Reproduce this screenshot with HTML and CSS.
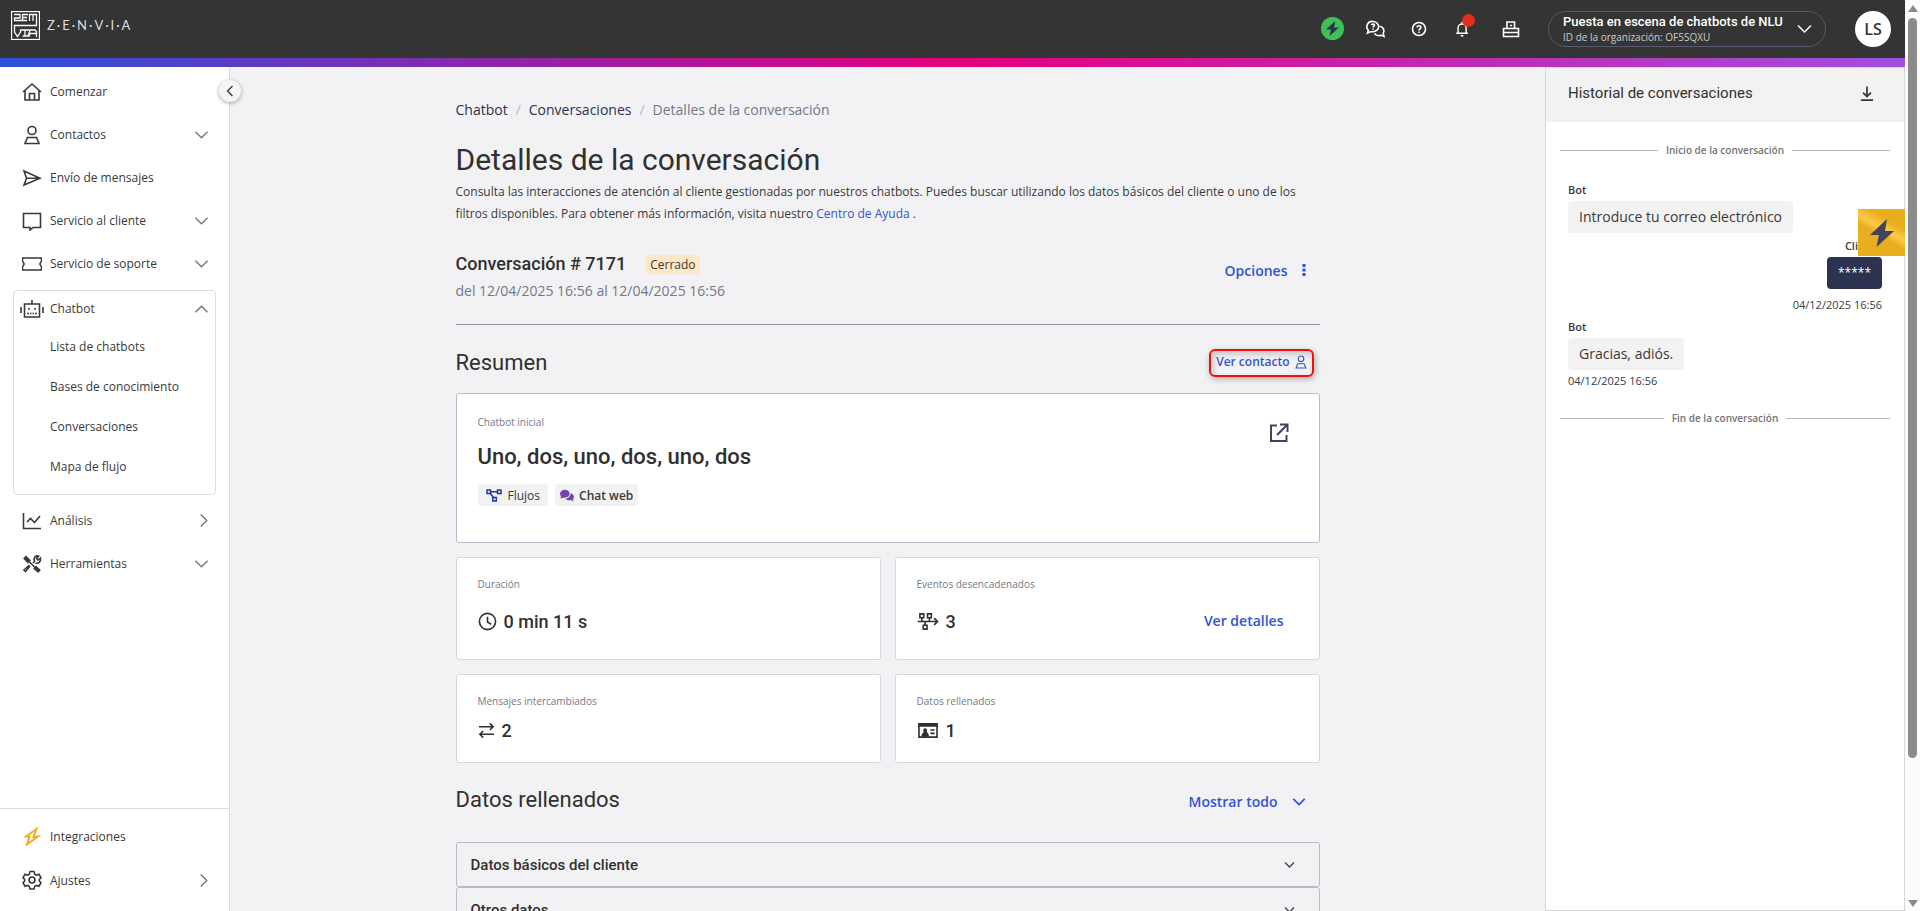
FILE: index.html
```html
<!DOCTYPE html>
<html lang="es">
<head>
    <meta charset="UTF-8">
    <meta name="viewport" content="width=device-width, initial-scale=1.0">
    <title>Detalles de la conversación</title>
    <link rel="stylesheet" href="styles.css">
</head>
<body>
<svg class="sprite" aria-hidden="true">
    <symbol id="down" viewBox="0 0 16 10"><path d="M1.500 1.500 8 8l6.500-6.500"/></symbol>
    <symbol id="up" viewBox="0 0 16 10"><path d="M1.500 8.500 8 2l6.500 6.500"/></symbol>
    <symbol id="right" viewBox="0 0 10 16"><path d="M1.500 1.500 8 8l-6.500 6.500"/></symbol>
    <symbol id="person" viewBox="0 0 20 20"><circle cx="10" cy="5.500" r="4"/><path d="M5.500 12.500h9l2.500 6H3z"/></symbol>
    <symbol id="bolt" viewBox="0 0 24 28"><path d="M17 0 0 16h9L6.500 28 24 12h-9z"/></symbol>
</svg>

<div class="app">
    <header class="topbar">
        <a class="brand" href="#" aria-label="Zenvia">
            <svg class="logo" viewBox="0 0 29 29">
                <rect x=".5" y=".5" width="28" height="28"/>
                <path d="M3 3.500h6V7H3.500v2.500H16M17 3.500h-5.500v6M11.500 6.500H16M18.500 10V3.500H25.500V14.500H3.500V21l3 4.500L9.500 21v-2h14.500l1.500 1.500v5.500M14 19v6M11.500 25h6V22.500h8M18.500 19v6.500M22 3.500V10"/>
            </svg>
            <span class="brand-name">Z·E·N·V·I·A</span>
        </a>
        <nav class="top-actions">
            <button type="button" class="go" aria-label="Integraciones"><svg viewBox="0 0 24 28"><use href="#bolt"/></svg></button>
            <button type="button" class="top-btn" aria-label="Chat de ayuda">
                <svg viewBox="0 0 20 18">
                    <path d="M7 1.500a5.500 5 0 0 1 0 10.200H4.300L1.500 13l.8-2.700A5.300 5.300 0 0 1 7 1.500z"/>
                    <path d="M13.500 6.200c4 .3 5.500 4.600 3.700 7.300l.8 3-3-1.200c-2.500.8-5.400-.1-6.500-2"/>
                    <path d="M5.600 5.200c.2-1.500 2.900-1.500 2.900.1 0 1-1.400 1-1.400 2.200M7.100 8.500v1.200"/>
                </svg>
            </button>
            <button type="button" class="top-btn" aria-label="Ayuda">
                <svg viewBox="0 0 18 18">
                    <circle cx="9" cy="9" r="6.500"/>
                    <path d="M7.200 7.500c0-2.300 3.700-2.200 3.700 0 0 1.400-1.900 1.400-1.900 2.900M9 11.500V13"/>
                </svg>
            </button>
            <button type="button" class="top-btn" aria-label="Notificaciones">
                <svg viewBox="0 0 18 20">
                    <path d="M9 2v2M4.500 14.500V9a4.500 4.500 0 0 1 9 0v5.500M2.500 14.800h13M7.500 17.500h3"/>
                </svg>
                <span class="dot"></span>
            </button>
            <button type="button" class="top-btn" aria-label="Facturas">
                <svg viewBox="0 0 18 18"><path d="M5 9V2h7.500v7M1.500 8.500h15v8h-15zM1.500 12.500h15M8 5.500h2"/></svg>
            </button>
        </nav>
        <button type="button" class="org">
            <span class="org-text">
                <span class="org-name">Puesta en escena de chatbots de NLU</span>
                <span class="org-id">ID de la organización: OF5SQXU</span>
            </span>
            <svg class="chev" viewBox="0 0 16 10"><use href="#down"/></svg>
        </button>
        <button type="button" class="avatar">LS</button>
    </header>

    <div class="body">
        <aside class="sidebar">
            <nav class="menu">
                <a class="item" href="#">
                    <svg class="ico" viewBox="0 0 20 20"><path d="M1 10 10 2l9 8M3 8.500V18h14V8.500M7.500 18v-6.500h5V18"/></svg>
                    <span>Comenzar</span>
                </a>
                <a class="item" href="#">
                    <svg class="ico" viewBox="0 0 20 20"><use href="#person"/></svg>
                    <span>Contactos</span>
                    <svg class="chev" viewBox="0 0 16 10"><use href="#down"/></svg>
                </a>
                <a class="item" href="#">
                    <svg class="ico" viewBox="0 0 20 20"><path d="M2 3l16 7.200L2 17l2.500-6.800zM4.500 10.200H18"/></svg>
                    <span>Envío de mensajes</span>
                </a>
                <a class="item" href="#">
                    <svg class="ico" viewBox="0 0 20 20"><path d="M1.500 2.500h17v14H11L8 19v-2.500H1.500z"/></svg>
                    <span>Servicio al cliente</span>
                    <svg class="chev" viewBox="0 0 16 10"><use href="#down"/></svg>
                </a>
                <a class="item" href="#">
                    <svg class="ico" viewBox="0 0 20 20"><path d="M.5 4h19v3.500q-3 2.500 0 5V16H.5v-3.500q3-2.500 0-5z"/></svg>
                    <span>Servicio de soporte</span>
                    <svg class="chev" viewBox="0 0 16 10"><use href="#down"/></svg>
                </a>
                <div class="group">
                    <a class="item" href="#">
                        <svg class="ico ico-bot" viewBox="0 0 24 20">
                            <path d="M4.500 5h15v13h-15zM12 5V1M1 8v6M23 8v6"/>
                            <path d="M8 10h2M14 10h2M7 14.500h2M10 14.500h1.500M12.500 14.500H14M15 14.500h2"/>
                        </svg>
                        <span>Chatbot</span>
                        <svg class="chev" viewBox="0 0 16 10"><use href="#up"/></svg>
                    </a>
                    <a class="sub" href="#">Lista de chatbots</a>
                    <a class="sub" href="#">Bases de conocimiento</a>
                    <a class="sub" href="#">Conversaciones</a>
                    <a class="sub" href="#">Mapa de flujo</a>
                </div>
                <a class="item" href="#">
                    <svg class="ico" viewBox="0 0 20 20"><path d="M1.500 2v15.500H19M5 11l3.500-3.500 4 4L18 5"/></svg>
                    <span>Análisis</span>
                    <svg class="chev chev-right" viewBox="0 0 10 16"><use href="#right"/></svg>
                </a>
                <a class="item" href="#">
                    <svg class="ico" viewBox="0 0 20 20">
                        <path class="thick" d="M2.500 3l5 5M12.500 13l5 4.500"/>
                        <path d="M7 7.500l6 6M8 12l-4.500 5.500L2 16l5.500-5M11 9l1.500-1.500c-1.500-4 1-6 4-5.500L14.500 4.500 16 6l2.500-2c.5 4-2 6-5 5"/>
                    </svg>
                    <span>Herramientas</span>
                    <svg class="chev" viewBox="0 0 16 10"><use href="#down"/></svg>
                </a>
            </nav>
            <nav class="menu-bottom">
                <a class="item" href="#">
                    <svg class="ico ico-gold" viewBox="0 0 20 20"><path d="M14.500 3 4 10.500h3.500L5 18.500 16 10.500l-4.500.5z"/></svg>
                    <span>Integraciones</span>
                </a>
                <a class="item" href="#">
                    <svg class="ico" viewBox="0 0 20 20">
                        <path d="M8 1.500h4l.7 2.600 1.800 1 2.500-.8 2 3.500-1.700 1.700v1.500l1.700 1.700-2 3.500-2.500-.8-1.800 1-.7 2.600H8l-.7-2.600-1.800-1-2.500.8-2-3.500 1.700-1.700V9.500L1 7.800l2-3.500 2.500.8 1.800-1z"/>
                        <circle cx="10" cy="10" r="3"/>
                    </svg>
                    <span>Ajustes</span>
                    <svg class="chev chev-right" viewBox="0 0 10 16"><use href="#right"/></svg>
                </a>
            </nav>
            <button type="button" class="collapse" aria-label="Contraer menú">
                <svg viewBox="0 0 8 12"><path d="M6.500 1 1.500 6l5 5"/></svg>
            </button>
        </aside>

        <main class="main">
            <div class="content">
                <nav class="crumbs">
                    <a href="#">Chatbot</a><span class="sep">/</span><a href="#">Conversaciones</a><span class="sep">/</span><span>Detalles de la conversación</span>
                </nav>
                <h1>Detalles de la conversación</h1>
                <p class="intro">Consulta las interacciones de atención al cliente gestionadas por nuestros chatbots. Puedes buscar utilizando los datos básicos del cliente o uno de los filtros disponibles. Para obtener más información, visita nuestro <a href="#">Centro de Ayuda</a> .</p>

                <section class="conv">
                    <div>
                        <div class="conv-title">
                            <h3>Conversación # 7171</h3>
                            <span class="badge">Cerrado</span>
                        </div>
                        <p class="dates">del 12/04/2025 16:56 al 12/04/2025 16:56</p>
                    </div>
                    <button type="button" class="link-btn options">Opciones
                        <svg class="kebab" viewBox="0 0 4 14"><path d="M.5 1h3v3h-3zM.5 5.500h3v3h-3zM.5 10h3v3h-3z"/></svg>
                    </button>
                </section>

                <div class="section-head">
                    <h2>Resumen</h2>
                    <button type="button" class="contact">Ver contacto
                        <svg viewBox="0 0 20 20"><use href="#person"/></svg>
                    </button>
                </div>

                <section class="card card-main">
                    <div>
                        <p class="label">Chatbot inicial</p>
                        <p class="bot-name">Uno, dos, uno, dos, uno, dos</p>
                        <div class="tags">
                            <span class="tag">
                                <svg viewBox="0 0 16 13"><path d="M1 1h3.500v3.500H1zM11.500 1H15v3.500h-3.500zM6.800 8.500h3.500V12H6.800zM4.500 2.700h7M4.300 4.500 7.500 8.500"/></svg>
                                Flujos
                            </span>
                            <span class="tag tag-web">
                                <svg viewBox="0 0 16 13"><path d="M5.500 0C2.500 0 0 2 0 4.500c0 1.200.5 2.200 1.300 3L.3 9.700c1.200 0 2.200-.4 3-1 3.900 1 7.700-1 7.700-4.200S8.500 0 5.500 0z"/><path d="M12 4c.3 3.500-2.500 5.800-6 6 1.200 1.700 4 2.500 6.500 1.700 1 .6 2 1 3.200 1l-1-2C17 8.500 16 5 12 4z"/></svg>
                                Chat web
                            </span>
                        </div>
                    </div>
                    <a class="open" href="#" aria-label="Abrir chatbot"><svg viewBox="0 0 20 20"><path d="M8 2.500H2V18h15.500v-6M11 1.500h7.500V9M18 2 8 12"/></svg></a>
                </section>

                <div class="grid">
                    <section class="card card-tall">
                        <p class="label">Duración</p>
                        <p class="value"><svg viewBox="0 0 20 20"><circle cx="10" cy="10" r="8.500"/><path d="M10 5v5.500l4 2.500"/></svg>0 min 11 s</p>
                    </section>
                    <section class="card card-tall">
                        <p class="label">Eventos desencadenados</p>
                        <div class="row">
                            <p class="value"><svg class="wide" viewBox="0 0 22 20"><path d="M2.500 2H6.500v4h-4zM10.500 2h4v4h-4zM6 14h4v4H6zM4.500 6v4M12.500 6v4M8 10v4M0 10h20.500M17.500 6.500 21 10l-3.500 3.500"/></svg>3</p>
                            <a class="details" href="#">Ver detalles</a>
                        </div>
                    </section>
                    <section class="card">
                        <p class="label">Mensajes intercambiados</p>
                        <p class="value"><svg class="narrow" viewBox="0 0 18 18"><path d="M1 5h15M12.500 1.500 16 5l-3.500 3.500M17 13H2M5.500 9.500 2 13l3.500 3.500"/></svg>2</p>
                    </section>
                    <section class="card">
                        <p class="label">Datos rellenados</p>
                        <p class="value"><svg class="wide" viewBox="0 0 22 20"><path d="M1.500 3h19v14h-19z"/><path class="fill" d="M1 2h20v4H1zM6 9.500A2 2 0 1 1 9.500 11q2.500 2 2.500 5.500H4q0-3.500 2.500-5z"/><path d="M13.500 9.500H18M13.500 13H18"/></svg>1</p>
                    </section>
                </div>

                <div class="section-head filled">
                    <h2>Datos rellenados</h2>
                    <button type="button" class="link-btn">Mostrar todo
                        <svg class="chev" viewBox="0 0 16 10"><use href="#down"/></svg>
                    </button>
                </div>
                <button type="button" class="accordion">Datos básicos del cliente<svg class="chev" viewBox="0 0 16 10"><use href="#down"/></svg></button>
                <button type="button" class="accordion">Otros datos<svg class="chev" viewBox="0 0 16 10"><use href="#down"/></svg></button>
            </div>
        </main>

        <aside class="history">
            <header class="history-head">
                <h2>Historial de conversaciones</h2>
                <button type="button" aria-label="Descargar"><svg viewBox="0 0 16 18"><path d="M8 1v11M3.500 8 8 12.500 12.500 8M1 16.500h14"/></svg></button>
            </header>
            <div class="mark">Inicio de la conversación</div>
            <div class="msg">
                <span class="who">Bot</span>
                <p class="bubble">Introduce tu correo electrónico</p>
            </div>
            <div class="msg msg-client">
                <span class="who">Cliente</span>
                <p class="bubble">*****</p>
                <time>04/12/2025 16:56</time>
            </div>
            <div class="msg">
                <span class="who">Bot</span>
                <p class="bubble">Gracias, adiós.</p>
                <time>04/12/2025 16:56</time>
            </div>
            <div class="mark mark-end">Fin de la conversación</div>
            <button type="button" class="widget" aria-label="Accesos rápidos"><svg viewBox="0 0 24 28"><use href="#bolt"/></svg></button>
        </aside>
    </div>
</div>

<div class="scrollbar">
    <span class="arrow"></span>
    <span class="thumb"></span>
    <span class="arrow arrow-down"></span>
</div>
</body>
</html>
```
FILE: styles.css
```css
* {
    box-sizing: border-box;
}

body {
    margin: 0;
    display: flex;
    height: 100vh;
    overflow: hidden;
    font-family: "Open Sans", sans-serif;
    font-size: 12px;
    color: #393939;
    background-color: #f2f2f4;
}

h1,
h2,
h3,
p {
    margin: 0;
}

h1,
h2,
h3 {
    color: #303030;
    font-weight: 400;
}

a {
    color: inherit;
    text-decoration: none;
}

button {
    font: inherit;
    color: inherit;
    background: none;
    border: 0;
    padding: 0;
    cursor: pointer;
}

svg {
    display: block;
    flex: none;
    fill: none;
    stroke: currentColor;
    stroke-width: 2;
}

.sprite {
    display: none;
}

.app {
    flex: 1;
    min-width: 0;
    display: flex;
    flex-direction: column;
}

.chev {
    width: 15px;
    height: 10px;
    stroke-width: 1.5;
}

/* Top bar */
.topbar {
    display: flex;
    align-items: center;
    height: 67px;
    flex: none;
    padding: 0 14px 10px 11px;
    color: #fff;
    background: linear-gradient(90deg, #2b50da, #e6007e 50%, #a04fdf) bottom / 100% 9px no-repeat #343434;
}

.brand {
    display: flex;
    align-items: center;
    gap: 7px;
    margin-right: auto;
    padding-bottom: 7px;
}

.logo {
    width: 29px;
    height: 29px;
    stroke-width: 1.3;
}

.brand-name {
    font-family: Lato, sans-serif;
    font-size: 13px;
    letter-spacing: 2px;
    color: #ddd;
}

.top-actions {
    display: flex;
    align-items: center;
    gap: 21px;
    margin-right: 26px;
}

.top-btn {
    position: relative;
    display: flex;
    justify-content: center;
    width: 22px;
}

.top-btn svg {
    height: 18px;
    stroke-width: 1.6;
}

.top-btn:last-child {
    margin-left: 6px;
}

.go {
    display: flex;
    align-items: center;
    justify-content: center;
    width: 23px;
    height: 23px;
    border-radius: 50%;
    background-color: #40bf58;
}

.go svg {
    width: 13px;
    height: 15px;
    fill: #2b3350;
    stroke: none;
}

.dot {
    position: absolute;
    top: -6px;
    right: -2px;
    width: 13px;
    height: 13px;
    border-radius: 50%;
    background-color: #e02f1c;
}

.org {
    display: flex;
    align-items: center;
    justify-content: space-between;
    width: 278px;
    height: 36px;
    padding: 0 12px 0 14px;
    border: 1px solid #575b72;
    border-radius: 18px;
    text-align: left;
}

.org-text {
    display: grid;
}

.org-name {
    font-family: Roboto, sans-serif;
    font-size: 13px;
    font-weight: 500;
    line-height: 16px;
}

.org-id {
    font-size: 10px;
    line-height: 14px;
    color: #ccc;
}

.org .chev {
    width: 17px;
}

.avatar {
    width: 36px;
    height: 36px;
    margin-left: 29px;
    border-radius: 50%;
    background-color: #fff;
    color: #343434;
    font-size: 16px;
    font-weight: 600;
}

.body {
    display: flex;
    flex: 1;
    min-height: 0;
}

/* Side menu */
.sidebar {
    position: relative;
    display: flex;
    flex-direction: column;
    justify-content: space-between;
    width: 230px;
    flex: none;
    border-right: 1px solid #d9dae0;
    background-color: #fff;
}

.menu {
    padding: 3px 13px 0;
}

.item {
    display: flex;
    align-items: center;
    height: 43px;
    padding: 0 7px 0 9px;
}

.item span {
    margin-left: 8px;
    margin-right: auto;
}

.item .chev {
    stroke: #747789;
}

.item .chev-right {
    width: 10px;
    height: 15px;
}

.ico {
    width: 20px;
    height: 20px;
    stroke-width: 1.6;
}

.ico-bot {
    width: 24px;
    margin: 0 -2px;
}

.thick {
    stroke-width: 4;
}

.ico-gold {
    color: #eeb020;
    stroke-width: 2;
}

.group {
    margin: 5px 0 4px;
    padding-bottom: 8px;
    border: 1px solid #dcdde2;
    border-radius: 4px;
}

.group .item {
    height: 35px;
    padding: 0 6px 0 8px;
}

.sub {
    display: flex;
    align-items: center;
    height: 40px;
    padding-left: 36px;
}

.menu-bottom {
    padding: 5px 13px 9px;
    border-top: 1px solid #d9dae0;
}

.menu-bottom .item {
    height: 44px;
}

.collapse {
    position: absolute;
    top: 13px;
    right: -12px;
    z-index: 1;
    display: flex;
    align-items: center;
    justify-content: center;
    width: 22px;
    height: 22px;
    border-radius: 50%;
    background-color: #f5f5f7;
    box-shadow: 0 1px 4px rgba(0, 0, 0, 0.35);
}

.collapse svg {
    width: 8px;
    height: 12px;
    stroke-width: 1.4;
}

/* Main column */
.main {
    flex: 1;
    min-width: 0;
    overflow: hidden;
    padding: 32px 24px 0;
}

.content {
    max-width: 864px;
    margin: 0 auto;
}

.crumbs {
    font-size: 14px;
    line-height: 22px;
    color: #747789;
}

.crumbs a {
    color: #2b3350;
}

.sep {
    padding: 0 8px;
    color: #b5b8c2;
}

h1 {
    margin-top: 20px;
    font-family: Roboto, sans-serif;
    font-size: 30px;
    line-height: 38px;
}

.intro {
    margin-top: 2px;
    line-height: 22px;
}

.intro a {
    color: #3153d8;
}

.conv {
    display: flex;
    align-items: flex-start;
    justify-content: space-between;
    margin-top: 25px;
    padding-bottom: 20px;
    border-bottom: 1px solid #8e909b;
}

.conv-title {
    display: flex;
    align-items: center;
    gap: 20px;
}

h3 {
    font-family: Roboto, sans-serif;
    font-size: 18px;
    line-height: 28px;
    font-weight: 500;
}

.badge {
    padding: 0 4px;
    border-radius: 3px;
    background-color: #fde7c7;
    line-height: 19px;
}

.dates {
    font-size: 14px;
    line-height: 26px;
    color: #747789;
}

.link-btn {
    display: flex;
    align-items: center;
    gap: 14px;
    padding-right: 14px;
    font-size: 14px;
    font-weight: 600;
    color: #3153d8;
}

.options {
    height: 40px;
}

.kebab {
    width: 4px;
    height: 14px;
    fill: currentColor;
    stroke: none;
}

.section-head {
    display: flex;
    align-items: center;
    justify-content: space-between;
    margin: 23px 0 16px;
}

h2 {
    font-family: Roboto, sans-serif;
    font-size: 22px;
    line-height: 29px;
}

.contact {
    display: flex;
    align-items: center;
    gap: 4px;
    height: 28px;
    margin-right: 6px;
    padding: 0 4px 2px 5px;
    border: 2px solid #ee1111;
    border-radius: 6px;
    box-shadow: 1px 2px 6px rgba(0, 0, 0, 0.3), inset 2px 3px 6px rgba(0, 0, 0, 0.2);
    font-weight: 600;
    color: #3153d8;
}

.contact svg {
    width: 14px;
    height: 14px;
    stroke-width: 1.6;
}

.card {
    padding: 17px 35px 17px 21px;
    border: 1px solid #d6d7de;
    border-radius: 3px;
    background-color: #fff;
}

.card-tall {
    padding-bottom: 23px;
}

.card-main {
    display: flex;
    justify-content: space-between;
    padding: 19px 30px 36px 21px;
    border-color: #b9bcc8;
}

.label {
    font-size: 10px;
    line-height: 18px;
    color: #747789;
}

.bot-name {
    margin-top: 11px;
    font-family: Roboto, sans-serif;
    font-size: 22px;
    font-weight: 500;
    line-height: 30px;
    color: #303030;
}

.tags {
    display: flex;
    gap: 7px;
    margin-top: 12px;
}

.tag {
    display: flex;
    align-items: center;
    gap: 6px;
    height: 22px;
    padding: 0 8px;
    border-radius: 3px;
    background-color: #f2f2f2;
}

.tag svg {
    width: 16px;
    height: 13px;
    stroke: #2233a8;
    stroke-width: 1.5;
}

.tag-web {
    gap: 5px;
    padding: 0 5px;
    font-weight: 600;
}

.tag-web svg {
    width: 14px;
    fill: #7344a8;
    stroke: none;
}

.open {
    margin-top: 10px;
    color: #40435f;
}

.open svg {
    width: 20px;
    height: 20px;
}

.grid {
    display: grid;
    grid-template-columns: 1fr 1fr;
    gap: 14px;
    margin-top: 14px;
}

.value {
    display: flex;
    align-items: center;
    gap: 7px;
    height: 30px;
    margin-top: 5px;
    font-family: Roboto, sans-serif;
    font-size: 18px;
    font-weight: 500;
    color: #303030;
}

.card-tall .value {
    margin-top: 13px;
}

.value svg {
    width: 19px;
    height: 19px;
    stroke-width: 1.7;
}

.value .wide {
    width: 22px;
}

.value .narrow {
    width: 17px;
}

.fill {
    fill: currentColor;
    stroke: none;
}

.row {
    display: flex;
    align-items: flex-end;
    justify-content: space-between;
}

.details {
    font-size: 14px;
    font-weight: 600;
    line-height: 30px;
    color: #3153d8;
}

.filled {
    margin: 22px 0 28px;
}

.filled .link-btn {
    margin-top: 4px;
}

.filled .chev {
    width: 14px;
    stroke-width: 2;
}

.accordion {
    display: flex;
    align-items: center;
    justify-content: space-between;
    width: 100%;
    height: 45px;
    padding: 0 24px 0 14px;
    border: 1px solid #b9bcc8;
    border-radius: 3px;
    font-family: Roboto, sans-serif;
    font-size: 15px;
    font-weight: 500;
    color: #303030;
}

.accordion .chev {
    width: 11px;
    stroke: #40435f;
    stroke-width: 2;
}

/* Conversation history */
.history {
    position: relative;
    width: 360px;
    flex: none;
    border: 1px solid #d6d7de;
    background-color: #fff;
}

.history-head {
    display: flex;
    align-items: center;
    justify-content: space-between;
    height: 54px;
    padding: 0 30px 3px 22px;
    background-color: #f2f2f2;
}

.history-head h2 {
    font-size: 15px;
}

.history-head svg {
    width: 14px;
    height: 17px;
}

.mark {
    display: flex;
    align-items: center;
    gap: 8px;
    margin: 18px 14px 21px;
    font-size: 10px;
    font-weight: 600;
    line-height: 20px;
    color: #747474;
}

.mark::before,
.mark::after {
    content: "";
    flex: 1;
    border-top: 1px solid #b5b8c2;
}

.msg {
    display: flex;
    flex-direction: column;
    align-items: flex-start;
    padding: 0 22px;
}

.who {
    font-size: 11px;
    font-weight: 600;
    line-height: 18px;
    margin-bottom: 2px;
}

.bubble {
    padding: 0 11px;
    border-radius: 4px;
    background-color: #f2f2f2;
    font-size: 14px;
    line-height: 32px;
}

.msg-client {
    align-items: flex-end;
    padding-top: 4px;
    padding-bottom: 2px;
}

.msg-client .bubble {
    background-color: #2b3350;
    color: #fff;
    font-size: 12px;
    margin-bottom: 5px;
}

.msg time {
    font-size: 11px;
    line-height: 22px;
}

.mark-end {
    margin-top: 16px;
}

.widget {
    position: absolute;
    top: 141px;
    right: -1px;
    display: flex;
    align-items: center;
    justify-content: center;
    width: 47px;
    height: 47px;
    background: linear-gradient(30deg, #e9ae1e 45%, #ffc94d 56%, #e9ae1e 72%);
}

.widget svg {
    width: 24px;
    height: 28px;
    fill: #40435f;
    stroke: none;
}

/* Page scrollbar */
.scrollbar {
    display: flex;
    flex-direction: column;
    align-items: center;
    justify-content: space-between;
    width: 15px;
    flex: none;
    padding: 5px 0 4px;
    background-color: #fcfcfc;
}

.arrow {
    border: 5px solid transparent;
    border-top-width: 0;
    border-bottom: 7px solid #8b8b8b;
}

.arrow-down {
    border-top: 7px solid #8b8b8b;
    border-bottom-width: 0;
}

.thumb {
    width: 9px;
    height: 82%;
    margin: 6px 0 auto;
    border-radius: 5px;
    background-color: #8b8b8b;
}
```
